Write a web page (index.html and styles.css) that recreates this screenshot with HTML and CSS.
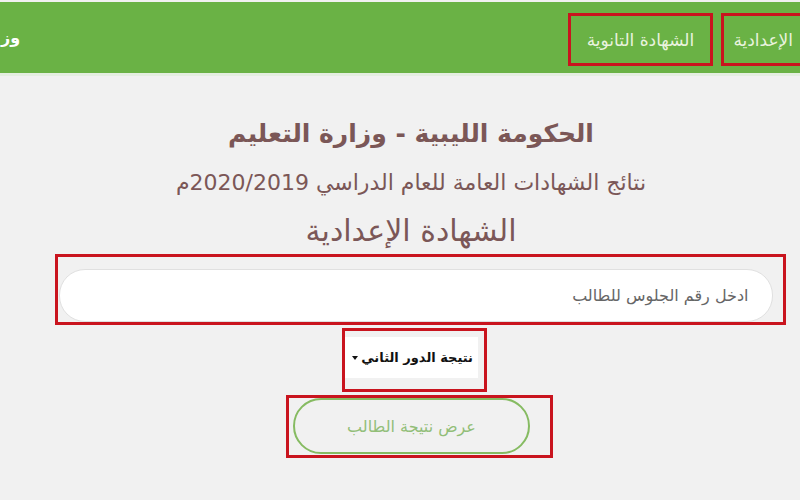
FILE: index.html
```html
<!DOCTYPE html>
<html lang="ar" dir="rtl">
<head>
<meta charset="utf-8">
<link rel="stylesheet" href="styles.css">
</head>
<body>
<nav class="navbar">
  <ul class="menu">
    <li class="menu-item mark cut">الإعدادية</li>
    <li class="menu-item mark">الشهادة التانوية</li>
  </ul>
  <div class="brand">وز</div>
</nav>
<main class="main">
  <h1 class="title">الحكومة الليبية - وزارة التعليم</h1>
  <h2 class="subtitle year">نتائج الشهادات العامة للعام الدراسي 2020/2019م</h2>
  <h2 class="subtitle grade">الشهادة الإعدادية</h2>
  <div class="mark field-box">
    <div class="input">ادخل رقم الجلوس للطالب</div>
  </div>
  <div class="mark select-box">
    <div class="select"><span class="select-text">نتيجة الدور الثاني</span><span class="caret"></span></div>
  </div>
  <div class="mark button-box">
    <div class="button">عرض نتيجة الطالب</div>
  </div>
</main>
</body>
</html>
```
FILE: styles.css
```css
html, body {
  margin: 0;
  padding: 0;
  background: #f1f1f1;
  overflow: hidden;
  width: 800px;
  height: 500px;
}
body {
  font-family: "DejaVu Sans", "Noto Sans", sans-serif;
  padding-top: 2px;
}
.mark {
  border: 3px solid #c9141e;
  box-sizing: border-box;
}
.navbar {
  height: 71px;
  background: #6ab245;
  display: flex;
  justify-content: space-between;
  align-items: flex-start;
  overflow: hidden;
  border-bottom: 3px solid #e4eee0;
}
.menu {
  list-style: none;
  margin: 11px -3px 0 0;
  padding: 0;
  display: flex;
  gap: 8px;
}
.menu-item {
  height: 53px;
  width: 145px;
  justify-content: center;
  display: flex;
  align-items: center;
  color: #e9f3de;
  font-size: 17px;
  white-space: nowrap;
}
.menu-item.cut {
  width: 82px;
  justify-content: flex-start;
  padding-right: 7px;
}
.brand {
  color: #ffffff;
  font-size: 16px;
  font-weight: bold;
  align-self: center;
  margin-left: 1px;
}
.main {
  display: flex;
  flex-direction: column;
  align-items: center;
  padding-left: 22px;
  padding-top: 38px;
}
.title {
  margin: 0;
  font-size: 25px;
  line-height: 40px;
  font-weight: bold;
  color: #7b5757;
}
.subtitle {
  margin: 0;
  font-weight: normal;
  color: #7b5757;
  white-space: nowrap;
}
.year {
  margin-top: 4px;
  font-size: 22px;
  line-height: 50px;
}
.grade {
  font-size: 30px;
  line-height: 46px;
}
.field-box {
  width: 731px;
  height: 71px;
  margin-left: 18px;
  padding: 12px 10px 0 1px;
}
.input {
  height: 53px;
  background: #ffffff;
  border: 1px solid #e0e0e0;
  border-radius: 26px;
  box-sizing: border-box;
  display: flex;
  align-items: center;
  padding-right: 23px;
  color: #666666;
  font-size: 16px;
}
.select-box {
  width: 145px;
  height: 64px;
  margin-top: 3px;
  margin-left: 7px;
  padding: 6px 6px 11px 0;
}
.select {
  height: 100%;
  background: #ffffff;
  display: flex;
  align-items: center;
  justify-content: space-between;
  padding: 0 5px 0 7px;
  color: #111111;
  font-size: 13px;
  font-weight: bold;
  white-space: nowrap;
}
.caret {
  width: 0;
  height: 0;
  border-left: 3px solid transparent;
  border-right: 3px solid transparent;
  border-top: 4px solid #111111;
}
.button-box {
  width: 267px;
  height: 63px;
  margin-top: 3px;
  margin-left: 17px;
  padding: 0 20px 1px 4px;
  display: flex;
}
.button {
  flex: 1;
  border: 2px solid #86bb62;
  border-radius: 30px;
  display: flex;
  align-items: center;
  justify-content: center;
  color: #92be78;
  font-size: 16px;
}
```
